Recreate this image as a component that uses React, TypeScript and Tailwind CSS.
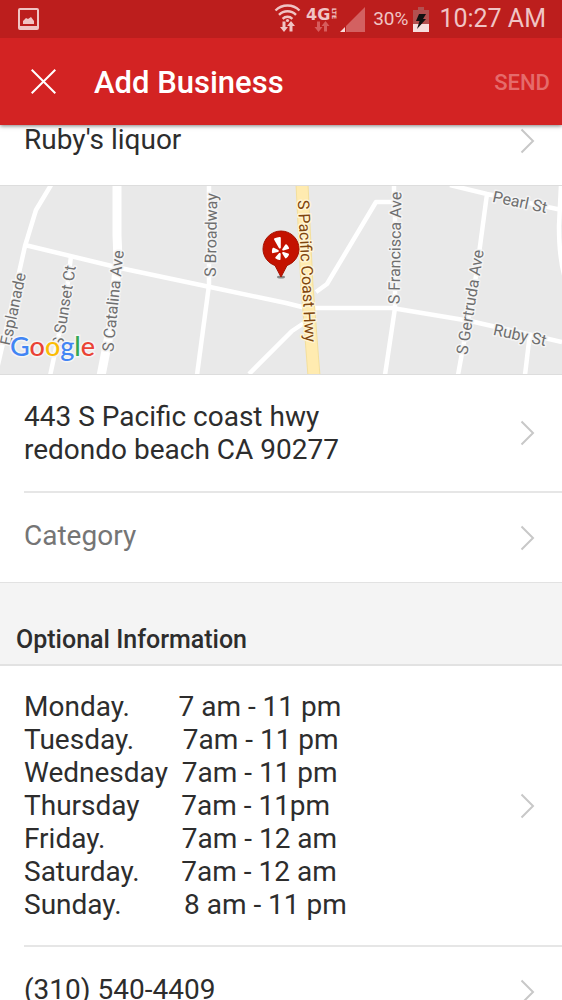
import React from "react";
import { FaYelp } from "react-icons/fa";

function Chevron() {
  return (
    <svg className="h-7 w-4 shrink-0" viewBox="0 0 16 28" fill="none" stroke="#c8c8c8" strokeWidth="2" aria-hidden="true">
      <path d="M1.5 2.5 13 14 1.5 25.5" />
    </svg>
  );
}

function StatusBar() {
  return (
    <div className="flex h-[38px] items-center bg-[#bc1e1d] pr-4 pl-[18px] text-[#f0c4c4]">
      <svg className="h-[23px] w-[21px]" viewBox="0 0 21 23" aria-label="Picture saved" role="img">
        <path fill="currentColor" fillRule="evenodd" d="M2 0h17a2 2 0 0 1 2 2v18a2 2 0 0 1-2 2H2a2 2 0 0 1-2-2V2A2 2 0 0 1 2 0Zm0 2v16h17V2Z" />
        <path fill="currentColor" d="M5 16v-3l3-3 2 1 3-2 3 4v3Z" />
      </svg>
      <div className="ml-auto flex items-center">
        <svg className="h-[30px] w-[27px]" viewBox="0 0 27 30" fill="none" stroke="currentColor" aria-label="Wi-Fi" role="img">
          <path strokeWidth="2.4" d="M1.5 6.5a17 17 0 0 1 24 0M5 10.8a12 12 0 0 1 17 0M8.6 14.8a7 7 0 0 1 9.8 0" />
          <circle cx="13.5" cy="16.5" r="1.6" fill="currentColor" stroke="none" />
          <path fill="currentColor" stroke="none" d="M8.5 17.5h3v5.5h2.5L10 28 6 23h2.500ZM15.500 27.500v-5.500H13L17 17l4 5h-2.500v5.500Z" />
        </svg>
        <svg className="ml-[5px] h-[30px] w-[31px]" viewBox="0 0 31 30" fill="currentColor" aria-label="4G LTE" role="img">
          <text x="0" y="16" fontFamily="'DejaVu Sans', sans-serif" fontWeight="700" fontSize="16">4G</text>
          <text transform="translate(26 4) rotate(90)" fontFamily="'DejaVu Sans', sans-serif" fontWeight="700" fontSize="6">LTE</text>
          <path fill="#d65c5c" d="M11 17.500h3V23h2.500L12.500 28 8.500 23H11ZM18 27.500v-5.500h-2.500L19.500 17l4 5H21v5.500Z" />
        </svg>
        <svg className="ml-[3px] h-[25px] w-[25px]" viewBox="0 0 25 25" aria-label="Signal" role="img">
          <path fill="#d36161" d="M25 0v25H6v-6Z" />
          <path fill="#f7dcdc" d="M5 20v5H0Z" />
        </svg>
        <span className="ml-2 text-[19px] leading-6">30%</span>
        <svg className="ml-[5px] h-[25px] w-4" viewBox="0 0 16 25" aria-label="Battery charging" role="img">
          <path fill="#b35050" d="M5 0h6v3h5v15H0V3h5Z" />
          <path fill="#f7dede" d="M0 17h16v8H0Z" />
          <path fill="#111" d="M6 7h7l-3 5h3L4 22l2.500-8H3Z" />
        </svg>
        <span className="ml-[10px] text-[25px] leading-8">10:27 AM</span>
      </div>
    </div>
  );
}

const streets = [
  { name: "Esplanade", x: 13, y: 123, angle: -78 },
  { name: "S Sunset Ct", x: 64, y: 120, angle: -81 },
  { name: "S Catalina Ave", x: 113, y: 115, angle: -84 },
  { name: "S Broadway", x: 211, y: 49, angle: -89 },
  { name: "S Francisca Ave", x: 395, y: 62, angle: -89 },
  { name: "S Gertruda Ave", x: 470, y: 116, angle: -81 },
  { name: "Pearl St", x: 520, y: 16, angle: 12 },
  { name: "Ruby St", x: 520, y: 149, angle: 12 },
];

function StreetMap() {
  return (
    <div className="overflow-hidden border-y border-[#dddddd] bg-[#e9e9e9]">
      <svg className="block h-[188px] w-full" viewBox="0 0 562 188" preserveAspectRatio="xMidYMid slice" role="img" aria-label="Map of Pacific Coast Highway">
        <g fill="none" stroke="#fff" strokeWidth="4.5" strokeLinejoin="round">
          <path d="M51-1 36 24 25 60 12 118-6 196" />
          <path strokeWidth="9" d="M117-1v50l1 25-7 65-10 51" />
          <path d="M25 59 120 82 210 101 286 117 306 122 392 122 470 135 562 156" />
          <path d="M71 70 65 120 50 190M209-1v100l-12 90" />
          <path d="M249 188 292 145 304 137M316 106 327 98 376 16 394 16V-1M395 16v106l-10 67M450-1 487 8 562 24M487 8 476 90 458 189M530 147 525 189M561-1 559 40Q559 75 566 95" />
        </g>
        <path d="M302-2 307 100 314 190" fill="none" stroke="#f3df9d" strokeWidth="13" />
        <path d="M302-2 307 100 314 190" fill="none" stroke="#ffebb0" strokeWidth="11" />
        <g fontFamily="Roboto, sans-serif" fontSize="16" textAnchor="middle" dominantBaseline="central" stroke="#f4f4f4" strokeWidth="3" paintOrder="stroke" strokeLinejoin="round" fill="#6f6f6f">
          {streets.map((s) => (
            <text key={s.name} transform={`translate(${s.x} ${s.y}) rotate(${s.angle})`}>{s.name}</text>
          ))}
          <text fill="#80450c" stroke="#fff4d2" transform="translate(307 85) rotate(87)">S Pacific Coast Hwy</text>
        </g>
        <ellipse cx="281" cy="91" rx="4" ry="1.5" fill="#888" />
        <path fill="#c41200" stroke="#a31100" d="M281 91 275 79.500C268 77 263 70.500 263 63a18 18 0 0 1 36 0c0 7.500-5 14-12 16.500Z" />
        <FaYelp x={269} y={51} size={23} color="#fff" />
        <text x="10" y="170" fontFamily="Lato, sans-serif" fontSize="27" fontWeight="500" stroke="#f5f5f5" strokeWidth="3" paintOrder="stroke">
          <tspan fill="#4285f4">G</tspan><tspan fill="#ea4335">o</tspan><tspan fill="#fbbc05">o</tspan><tspan fill="#4285f4">g</tspan><tspan fill="#34a853">l</tspan><tspan fill="#ea4335">e</tspan>
        </text>
      </svg>
    </div>
  );
}

function Row({ children, className, textClassName = "" }: { children: React.ReactNode; className: string; textClassName?: string }) {
  return (
    <button type="button" className={`flex w-full items-center justify-between pr-[26px] text-left text-[28px] leading-[33px] ${className}`}>
      <span className={`whitespace-pre ${textClassName}`}>{children}</span>
      <Chevron />
    </button>
  );
}

const hours = `Monday.       7 am - 11 pm
Tuesday.       7am - 11 pm
Wednesday  7am - 11 pm
Thursday      7am - 11pm
Friday.           7am - 12 am
Saturday.      7am - 12 am
Sunday.         8 am - 11 pm`;

export default function App() {
  return (
    <div className="flex h-screen flex-col bg-white font-['Roboto',sans-serif] text-[#2d2d2d]">
      <header className="relative z-10 shrink-0 shadow-[0_1px_4px_rgba(0,0,0,0.5)]">
        <StatusBar />
        <div className="flex h-[87px] items-center bg-[#d32323] pr-3 pl-[31px] text-white">
          <button type="button" aria-label="Close">
            <svg className="size-[25px]" viewBox="0 0 25 25" fill="none" stroke="currentColor" strokeWidth="2" aria-hidden="true">
              <path d="M.7.7 24.3 24.3M24.3.7.7 24.3" />
            </svg>
          </button>
          <h1 className="ml-[38px] pt-0.5 text-[31px] leading-10 font-medium">Add Business</h1>
          <button type="button" className="ml-auto pt-0.5 text-[22px] leading-7 font-medium text-[#e56b6b]">SEND</button>
        </div>
      </header>
      <main className="min-h-0 flex-1 overflow-y-auto [scrollbar-width:none]">
        <Row className="h-[60px] pb-7 pl-6" textClassName="pb-1">Ruby's liquor</Row>
        <StreetMap />
        <div className="pl-6">
          <Row className="h-[116px]">{"443 S Pacific coast hwy\nredondo beach CA 90277"}</Row>
          <div className="border-t-2 border-[#e6e6e6]">
            <Row className="h-[89px] text-[#757575]" textClassName="pb-1">Category</Row>
          </div>
        </div>
        <h2 className="border-t border-b-2 border-[#e2e2e2] bg-[#f4f4f4] px-4 pt-[42px] pb-[9px] text-[25px] leading-[30px] font-medium">Optional Information</h2>
        <div className="pl-6">
          <Row className="h-[279px]">{hours}</Row>
          <div className="border-t-2 border-[#e6e6e6]">
            <Row className="h-[89px]" textClassName="pb-1">(310) 540-4409</Row>
          </div>
        </div>
      </main>
    </div>
  );
}
